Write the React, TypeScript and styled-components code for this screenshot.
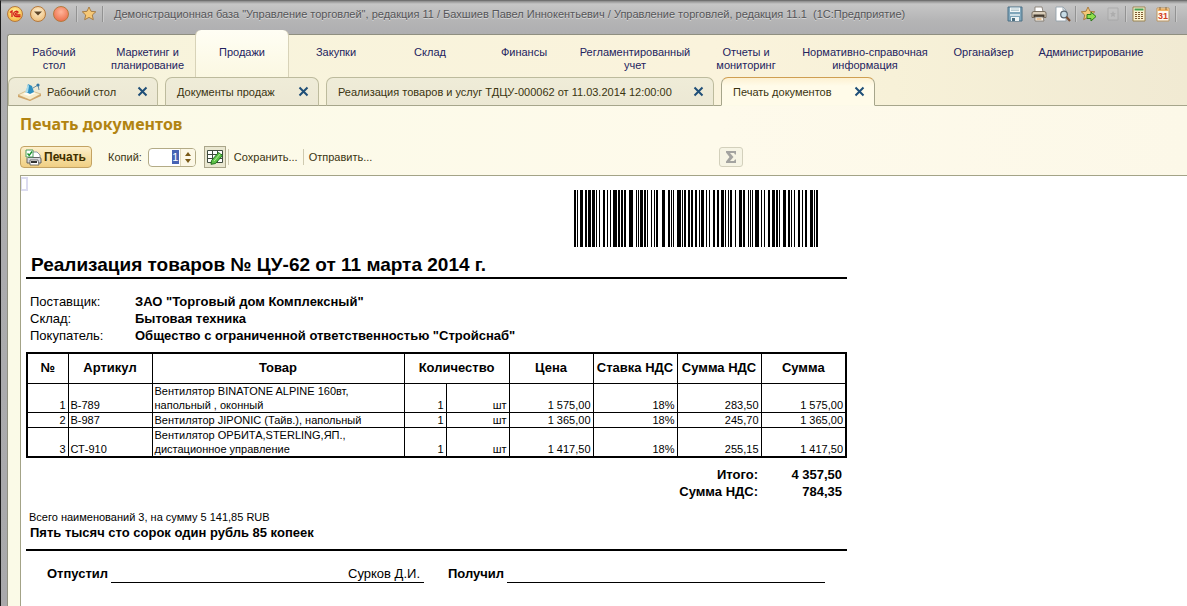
import React from "react";
import styled, { createGlobalStyle, css } from "styled-components";

const Global = createGlobalStyle`
  * { box-sizing: border-box; }
  body { margin: 0; font-family: "Liberation Sans", Arial, sans-serif; font-size: 11px; color: #3a3410; }
  button, input { font: inherit; color: inherit; margin: 0; }
  a { color: inherit; text-decoration: none; }
  p, h1, h2 { margin: 0; }
`;

const Window = styled.div`
  min-height: 100vh;
  display: flex;
  flex-direction: column;
  background: linear-gradient(#8a8a8a 0, #c6c6c6 3px, #b4b4b5 20px, #aeaeb0 34px, #a9a9ab 100%);
  border-left: 1px solid #1c1c1c;
  border-top: 1px solid #707070;
  overflow: hidden;
`;

const TitleBar = styled.header`
  height: 33px;
  flex: none;
  display: flex;
  align-items: center;
  padding: 0 10px 8px 6px;
`;

const RoundButton = styled.button<{ $from: string; $to: string }>`
  width: 16px;
  height: 16px;
  margin-right: 7px;
  padding: 0;
  display: grid;
  place-items: center;
  border: 1px solid #b5793c;
  border-radius: 50%;
  background: radial-gradient(circle at 50% 35%, ${(p) => p.$from}, ${(p) => p.$to});
  svg { display: block; }
`;

const Divider = styled.span`
  width: 2px;
  height: 16px;
  background: linear-gradient(90deg, #929292 50%, #cacaca 50%);
`;

const IconButton = styled.button`
  width: 24px;
  height: 18px;
  padding: 0;
  border: 0;
  background: none;
  display: grid;
  place-items: center;
`;

const Caption = styled.h1`
  flex: 1;
  min-width: 0;
  margin-left: 10px;
  font-size: 11px;
  font-weight: 400;
  line-height: 16px;
  white-space: nowrap;
  color: #555558;
  text-shadow: 0 1px 0 #d8d8d8;
`;

const Tools = styled.div`
  display: flex;
  align-items: center;
`;

const Frame = styled.div`
  flex: 1;
  display: flex;
  flex-direction: column;
  margin-left: 6px;
  border-left: 1px solid #8f8f80;
  border-top: 1px solid #8f8f80;
  border-top-left-radius: 3px;
  background: #fcfae8;
`;

const Head = styled.div`
  background: linear-gradient(90deg, #f7f4dc 0%, #faf3dc 60%, #f7f1d8 75%, #f1ead3 100%);
  border-top-left-radius: 3px;
`;

const Sections = styled.nav`
  display: flex;
  height: 42px;
`;

const Section = styled.a<{ $w: number; $active?: boolean }>`
  flex: 0 1 ${(p) => p.$w}px;
  padding-top: 11px;
  text-align: center;
  line-height: 13px;
  color: #23235f;
  white-space: pre-line;
  ${(p) =>
    p.$active &&
    css`
      margin-top: -5px;
      padding-top: 16px;
      border: 1px solid #d8d3b8;
      border-width: 0 1px;
      border-radius: 6px 6px 0 0;
      background: linear-gradient(#fffef4, #fbf8e2);
    `}
`;

const Tabs = styled.div`
  display: flex;
  gap: 7px;
  height: 29px;
  box-shadow: inset 0 -1px 0 #a6a58b;
`;

const Tab = styled.div<{ $w: number; $active?: boolean }>`
  flex: 0 1 ${(p) => p.$w}px;
  display: flex;
  align-items: center;
  padding: 0 8px 0 11px;
  border: 1px solid #bdbb9d;
  border-bottom-color: #a6a58b;
  border-radius: 7px 7px 0 0;
  background: linear-gradient(#efecd8, #ece8d4);
  white-space: nowrap;
  ${(p) =>
    p.$active &&
    css`
      border-color: #a6a58b;
      border-top-color: #cf9f52;
      border-bottom-color: #fcfae8;
      background: linear-gradient(#fdf1d2, #fffbe9 8px);
    `}
  svg { flex: none; }
  > svg { margin: 0 4px 0 -3px; }
`;

const TabLink = styled.a`
  flex: 1;
`;

const CloseButton = styled.button`
  width: 13px;
  height: 13px;
  padding: 0;
  border: 0;
  background: none;
  display: grid;
  place-items: center;
`;

const Page = styled.main`
  flex: 1;
  display: flex;
  flex-direction: column;
  padding: 8px 0 0 12px;
  background: linear-gradient(90deg, #fbfae7, #fefaeb 60%, #fcf8e8);
`;

const PageTitle = styled.h2`
  font-family: "Noto Sans", "Open Sans", sans-serif;
  font-size: 16px;
  line-height: 20px;
  font-weight: 700;
  color: #b28411;
`;

const Toolbar = styled.div`
  display: flex;
  align-items: center;
  max-width: 723px;
  height: 24px;
  margin: 11px 0 6px;
  white-space: nowrap;
`;

const PrintButton = styled.button`
  display: flex;
  align-items: center;
  gap: 2px;
  width: 72px;
  height: 22px;
  padding: 0 4px;
  border: 1px solid #c3a363;
  border-radius: 4px;
  background: linear-gradient(#fdf0cd, #f5dc9d 60%, #f0cf83);
  font-size: 12px;
  font-weight: 700;
  color: #3f3000;
`;

const CopiesLabel = styled.label`
  margin: 0 6px 0 16px;
`;

const Spinner = styled.div`
  display: flex;
  align-items: center;
  justify-content: flex-end;
  width: 48px;
  height: 19px;
  border: 1px solid #b3ab86;
  border-radius: 4px;
  background: #fff;
  overflow: hidden;
`;

const CopiesInput = styled.input`
  width: 7px;
  height: 14px;
  padding: 0;
  border: 0;
  background: #4763b4;
  color: #fff;
  text-align: center;
`;

const Steps = styled.div`
  display: flex;
  flex-direction: column;
  justify-content: center;
  gap: 3px;
  width: 15px;
  height: 17px;
  margin-left: 1px;
  border-left: 1px solid #ddd6b8;
  background: #fcf8e6;
`;

const Step = styled.button`
  height: 4px;
  padding: 0;
  border: 0;
  background: none;
  display: grid;
  place-items: center;
`;

const EditTableButton = styled.button`
  width: 22px;
  height: 22px;
  margin: 0 2px 0 8px;
  padding: 0;
  border: 1px solid #aaa68a;
  background: #e9e7d0;
  display: grid;
  place-items: center;
`;

const TextButton = styled.button`
  padding: 0 5px;
  border: 0;
  border-left: 1px solid #cfcab0;
  background: none;
  line-height: 16px;
`;

const SumButton = styled.button`
  width: 24px;
  height: 20px;
  margin-left: auto;
  padding: 0;
  border: 1px solid #d3d0bc;
  border-radius: 3px;
  background: #f6f4e4;
  display: grid;
  place-items: center;
`;

const Sheet = styled.section`
  flex: 1;
  padding: 14px 5px 0;
  border: 1px solid #a3a387;
  border-width: 1px 0 0 1px;
  background: #fff;
  color: #000;
  position: relative;
`;

const CellCursor = styled.span`
  position: absolute;
  left: 0;
  top: 1px;
  width: 7px;
  height: 14px;
  border: 2px solid #dcdcf0;
  border-left-width: 1px;
`;

const Paper = styled.div`
  max-width: 821px;
`;

const Barcode = styled.svg`
  display: block;
  margin-left: auto;
  margin-right: 29px;
`;

const DocTitle = styled.h2`
  margin-top: 5px;
  padding-left: 5px;
  height: 27px;
  font-size: 19px;
  line-height: 25px;
  border-bottom: 2px solid #000;
`;

const Parties = styled.dl`
  display: grid;
  grid-template-columns: 105px 1fr;
  margin: 14px 0 8px;
  padding-left: 4px;
  font-size: 13px;
  line-height: 17px;
  dt, dd { margin: 0; }
  dd { font-weight: 700; }
`;

const Goods = styled.table`
  width: calc(100% - 1px);
  table-layout: fixed;
  border-collapse: collapse;
  border: 2px solid #000;
  font-size: 11px;
  line-height: 14px;
  th {
    height: 30px;
    padding: 0;
    border: 1px solid #000;
    font-size: 13px;
    white-space: nowrap;
  }
  td {
    padding: 0 2px;
    border: 1px solid #000;
    vertical-align: bottom;
  }
`;

const Num = styled.td`
  text-align: right;
`;

const Totals = styled.dl`
  display: grid;
  grid-template-columns: 1fr 84px;
  margin: 8px 0 9px;
  padding-right: 5px;
  text-align: right;
  font-size: 13px;
  line-height: 17px;
  font-weight: 700;
  dt, dd { margin: 0; }
`;

const Summary = styled.p`
  padding-left: 3px;
  font-size: 11px;
  line-height: 16px;
`;

const InWords = styled.p`
  height: 26px;
  padding-left: 4px;
  font-size: 13px;
  line-height: 16px;
  font-weight: 700;
  border-bottom: 2px solid #000;
`;

const Signatures = styled.div`
  display: flex;
  gap: 24px;
  padding: 14px 22px 10px 21px;
  font-size: 13px;
  line-height: 17px;
`;

const Signature = styled.div`
  flex: 1;
  display: flex;
  gap: 3px;
`;

const SignatureLine = styled.span`
  flex: 1;
  padding-right: 4px;
  border-bottom: 1px solid #000;
  text-align: right;
`;

const sections: { name: string; w: number; active?: boolean }[] = [
  { name: "Рабочий\nстол", w: 92 },
  { name: "Маркетинг и\nпланирование", w: 95 },
  { name: "Продажи", w: 94, active: true },
  { name: "Закупки", w: 94 },
  { name: "Склад", w: 94 },
  { name: "Финансы", w: 94 },
  { name: "Регламентированный\nучет", w: 128 },
  { name: "Отчеты и\nмониторинг", w: 94 },
  { name: "Нормативно-справочная\nинформация", w: 144 },
  { name: "Органайзер", w: 93 },
  { name: "Администрирование", w: 122 },
];

const tabs: { name: string; w: number; home?: boolean; active?: boolean }[] = [
  { name: "Рабочий стол", w: 150, home: true },
  { name: "Документы продаж", w: 154 },
  { name: "Реализация товаров и услуг ТДЦУ-000062 от 11.03.2014 12:00:00", w: 388 },
  { name: "Печать документов", w: 154, active: true },
];

const goods = [
  ["1", "В-789", "Вентилятор BINATONE ALPINE 160вт, напольный , оконный", "1", "шт", "1 575,00", "18%", "283,50", "1 575,00"],
  ["2", "В-987", "Вентилятор JIPONIC (Тайв.), напольный", "1", "шт", "1 365,00", "18%", "245,70", "1 365,00"],
  ["3", "СТ-910", "Вентилятор ОРБИТА,STERLING,ЯП., дистационное управление", "1", "шт", "1 417,50", "18%", "255,15", "1 417,50"],
];

const columns = [41, 84, 252, 42, 63, 84, 84, 84, 85];

// Code 128 symbols: alternating bar and space widths in modules
const symbols =
  "211232 213131 121322 121241 212123 431111 312113 121124 332111 134111 222122 " +
  "221132 121322 223112 112313 312311 111242 121322 312113 322112 132212 2331112";

function barcodeBars() {
  const bars: { x: number; w: number }[] = [];
  let x = 0;
  symbols
    .replace(/ /g, "")
    .split("")
    .forEach((digit, i) => {
      const w = Number(digit);
      if (i % 2 === 0) bars.push({ x, w });
      x += w;
    });
  return bars;
}

const CloseIcon = () => (
  <svg width="11" height="11" viewBox="0 0 11 11">
    <path d="M1.5 1.5 9.5 9.5M9.5 1.5 1.5 9.5" stroke="#1f4f78" strokeWidth="2" />
  </svg>
);

const DeskIcon = () => (
  <svg width="26" height="20" viewBox="0 0 26 20">
    <path d="M1 13 11 8l13 4-11 6z" fill="#f8edcc" stroke="#c8ab72" strokeWidth=".7" />
    <path d="M1 13v2l12 4 11-5v-2l-11 6z" fill="#cfa468" />
    <path d="m6 12 6-3 7 2-7 3z" fill="#fffdf3" />
    <path d="M9 10 11 2l4 2 2 6-4 2z" fill="#2f8fc0" />
    <path d="m11 2 1 2-1 6-3 1z" fill="#a9dcec" />
    <path d="M16 6l5-3 1 5" fill="none" stroke="#47758f" strokeWidth=".8" />
    <circle cx="21" cy="3" r="1.6" fill="#3478a5" />
  </svg>
);

const StarIcon = ({ arrow }: { arrow?: boolean }) => (
  <svg width="16" height="16" viewBox="0 0 16 16">
    <path d="m7 1 2 4.3 4.8.5-3.500 3.200 1 4.700L7 11.400l-4.300 2.300 1-4.700L.3 5.800 5 5.300z" fill="#f5c877" stroke="#a1753a" strokeWidth=".9" />
    {arrow && <path d="M6 8.500h4V6l5 4.500-5 4.500v-2.500H6z" fill="#8ede4b" stroke="#2d7a1c" />}
  </svg>
);

const SaveIcon = () => (
  <svg width="16" height="16" viewBox="0 0 16 16">
    <path d="M1 1h14v14H1z" fill="#7fa5ba" stroke="#4d7186" />
    <path d="M3 1.500h10V6H3z" fill="#f3f7f8" />
    <path d="M4 3h8M4 4.500h8" stroke="#9db4bf" strokeWidth=".7" />
    <path d="M3 8h10v2H3z" fill="#cfe0e8" />
    <path d="M4 11h8v4H4z" fill="#eef3f5" />
    <path d="M5 12h3v3H5z" fill="#4c6e80" />
  </svg>
);

const PrinterIcon = () => (
  <svg width="16" height="16" viewBox="0 0 16 16">
    <path d="M4 1h7l1 5H4z" fill="#fff" stroke="#7d7468" strokeWidth=".8" />
    <path d="M1 7q0-1.500 2-1.500h10q2 0 2 1.500v4.500H1z" fill="#d9cdb9" stroke="#6f6557" strokeWidth=".9" />
    <path d="M2.500 8.500h11v2.500h-11z" fill="#453c31" />
    <path d="M4 11h8l1 4H4z" fill="#f8f4ea" stroke="#7d7468" strokeWidth=".8" />
    <path d="M5.500 13h5" stroke="#d38a3e" />
  </svg>
);

const PreviewIcon = () => (
  <svg width="16" height="16" viewBox="0 0 16 16">
    <path d="M1 1h7l3 3v11H1z" fill="#fff" stroke="#93a1ab" strokeWidth=".9" />
    <path d="M8 1v3h3" fill="none" stroke="#93a1ab" strokeWidth=".9" />
    <circle cx="9" cy="8.500" r="3.300" fill="#c8dce6" stroke="#58646d" strokeWidth="1.200" />
    <path d="m11.500 11 3.500 4" stroke="#7a4e31" strokeWidth="2" />
  </svg>
);

const DisabledIcon = () => (
  <svg width="12" height="14" viewBox="0 0 12 14" opacity=".6">
    <path d="M1 1h10v12H1z" fill="#c4c4c4" stroke="#a0a0a0" />
    <path d="m6 4 1 2h2L7.500 7.500 8 10 6 9l-2 1 .5-2.500L3 6h2z" fill="#a4a4a4" />
  </svg>
);

const CalcIcon = () => (
  <svg width="14" height="16" viewBox="0 0 14 16">
    <path d="M1 1h12v14H1z" fill="#fbf3d0" stroke="#9a8454" />
    <path d="M2.500 2.500h9v2h-9z" fill="#45a052" />
    <path d="M3 6.500h8M3 8.500h8M3 10.500h8M3 12.500h8" stroke="#7d5a31" strokeWidth="1.200" strokeDasharray="2 1" />
  </svg>
);

const CalendarIcon = () => (
  <svg width="14" height="16" viewBox="0 0 14 16">
    <path d="M1 2h12v13H1z" fill="#fffaf0" stroke="#bb9560" />
    <path d="M1.500 2.500h11V5h-11z" fill="#efb060" />
    <path d="M4 1v3M10 1v3" stroke="#8c6a3c" />
    <text x="7" y="13" textAnchor="middle" fontFamily="Liberation Sans" fontSize="9" fontWeight="700" fill="#d2401e">31</text>
  </svg>
);

const PrintCheckIcon = () => (
  <svg width="17" height="17" viewBox="0 0 17 17">
    <path d="M5 3h7l3 3v3H5z" fill="#fff" stroke="#77849a" strokeWidth=".8" />
    <path d="M3 8.500h11.500q1.500 0 1.500 1.500v4H2V9.500z" fill="#d6d8dc" stroke="#555" strokeWidth=".9" />
    <path d="M5 11h8l1 5H5z" fill="#fff" stroke="#555" strokeWidth=".8" />
    <path d="M6 12h6v2H6z" fill="#333" />
    <path d="M1 1h7v7H1z" fill="#fff" stroke="#4c9b5d" />
    <path d="m2.500 4.500 1.700 1.800L7 2.500" fill="none" stroke="#159127" strokeWidth="1.400" />
  </svg>
);

const EditTableIcon = () => (
  <svg width="18" height="16" viewBox="0 0 18 16">
    <path d="M1.500 1.500h15v12h-15z" fill="#fff" stroke="#3e4a3e" />
    <path d="M1.500 5.500h15M1.500 9.500h15M6.500 1.500v12M11.500 1.500v12" stroke="#3e4a3e" />
    <path d="m5.500 11.500 7-8 4 3-7 8-4.500.8z" fill="#5cc247" stroke="#20711e" />
    <path d="m8 12 6.500-7.500" stroke="#b7ec9c" />
  </svg>
);

export default function App() {
  return (
    <>
      <Global />
      <Window>
        <TitleBar>
          <RoundButton $from="#fff6a0" $to="#f5a62c" aria-label="Главное меню">
            <svg width="12" height="8" viewBox="0 0 12 8">
              <path d="M1 2.500 3 1v6M9.500 2.500A2.600 2.600 0 1 0 7.500 6.500H11.500M8.500 3.500A1 1 0 1 0 7.500 4.800H11.500" fill="none" stroke="#d3201a" strokeWidth="1.300" />
            </svg>
          </RoundButton>
          <RoundButton $from="#fff0d0" $to="#e8b269" aria-label="Меню">
            <svg width="8" height="5" viewBox="0 0 8 5">
              <path d="M0 .5h8L4 4.500z" fill="#5d4527" />
            </svg>
          </RoundButton>
          <RoundButton $from="#ffb59a" $to="#e8603a" aria-label="Закрыть" />
          <Divider />
          <IconButton aria-label="Избранное"><StarIcon /></IconButton>
          <Divider />
          <Caption>
            Демонстрационная база "Управление торговлей", редакция 11 / Бахшиев Павел Иннокентьевич / Управление торговлей, редакция 11.1&nbsp; (1С:Предприятие)
          </Caption>
          <Tools>
            <IconButton aria-label="Сохранить"><SaveIcon /></IconButton>
            <IconButton aria-label="Печать"><PrinterIcon /></IconButton>
            <IconButton aria-label="Предварительный просмотр"><PreviewIcon /></IconButton>
            <Divider />
            <IconButton aria-label="Добавить в избранное"><StarIcon arrow /></IconButton>
            <IconButton aria-label="Ссылка" disabled><DisabledIcon /></IconButton>
            <Divider />
            <IconButton aria-label="Калькулятор"><CalcIcon /></IconButton>
            <IconButton aria-label="Календарь"><CalendarIcon /></IconButton>
            <Divider />
          </Tools>
        </TitleBar>
        <Frame>
          <Head>
            <Sections>
              {sections.map((s) => (
                <Section key={s.name} href="#" $w={s.w} $active={s.active}>{s.name}</Section>
              ))}
            </Sections>
            <Tabs>
              {tabs.map((t) => (
                <Tab key={t.name} $w={t.w} $active={t.active}>
                  {t.home && <DeskIcon />}
                  <TabLink href="#">{t.name}</TabLink>
                  <CloseButton aria-label="Закрыть вкладку"><CloseIcon /></CloseButton>
                </Tab>
              ))}
            </Tabs>
          </Head>
          <Page>
            <PageTitle>Печать документов</PageTitle>
            <Toolbar>
              <PrintButton><PrintCheckIcon />Печать</PrintButton>
              <CopiesLabel htmlFor="copies">Копий:</CopiesLabel>
              <Spinner>
                <CopiesInput id="copies" defaultValue="1" />
                <Steps>
                  <Step aria-label="Больше"><svg width="6" height="4" viewBox="0 0 6 4"><path d="M0 4h6L3 0z" fill="#7a5a17" /></svg></Step>
                  <Step aria-label="Меньше"><svg width="6" height="4" viewBox="0 0 6 4"><path d="M0 0h6L3 4z" fill="#7a5a17" /></svg></Step>
                </Steps>
              </Spinner>
              <EditTableButton aria-label="Редактировать"><EditTableIcon /></EditTableButton>
              <TextButton>Сохранить...</TextButton>
              <TextButton>Отправить...</TextButton>
              <SumButton aria-label="Сумма">
                <svg width="14" height="14" viewBox="0 0 14 14">
                  <path d="M2 1h10v3.500h-1L10 3H6l3.500 4L6 11h4l1-1.500h1V13H2v-1.500L5.500 7 2 2.500z" fill="#a3a3a0" />
                </svg>
              </SumButton>
            </Toolbar>
            <Sheet>
              <CellCursor />
              <Paper>
                <Barcode width="244" height="57" viewBox="0 0 244 57" shapeRendering="crispEdges" role="img" aria-label="Штрихкод">
                  {barcodeBars().map((b) => (
                    <rect key={b.x} x={b.x} y="0" width={b.w} height="57" />
                  ))}
                </Barcode>
                <DocTitle>Реализация товаров № ЦУ-62 от 11 марта 2014 г.</DocTitle>
                <Parties>
                  <dt>Поставщик:</dt>
                  <dd>ЗАО "Торговый дом Комплексный"</dd>
                  <dt>Склад:</dt>
                  <dd>Бытовая техника</dd>
                  <dt>Покупатель:</dt>
                  <dd>Общество с ограниченной ответственностью "Стройснаб"</dd>
                </Parties>
                <Goods>
                  <colgroup>
                    {columns.map((w, i) => (
                      <col key={i} width={w} />
                    ))}
                  </colgroup>
                  <thead>
                    <tr>
                      <th>№</th>
                      <th>Артикул</th>
                      <th>Товар</th>
                      <th colSpan={2}>Количество</th>
                      <th>Цена</th>
                      <th>Ставка НДС</th>
                      <th>Сумма НДС</th>
                      <th>Сумма</th>
                    </tr>
                  </thead>
                  <tbody>
                    {goods.map((row) => (
                      <tr key={row[0]}>
                        {row.map((cell, i) =>
                          i === 1 || i === 2 ? <td key={i}>{cell}</td> : <Num key={i}>{cell}</Num>
                        )}
                      </tr>
                    ))}
                  </tbody>
                </Goods>
                <Totals>
                  <dt>Итого:</dt>
                  <dd>4 357,50</dd>
                  <dt>Сумма НДС:</dt>
                  <dd>784,35</dd>
                </Totals>
                <Summary>Всего наименований 3, на сумму 5 141,85 RUB</Summary>
                <InWords>Пять тысяч сто сорок один рубль 85 копеек</InWords>
                <Signatures>
                  <Signature>
                    <b>Отпустил</b>
                    <SignatureLine>Сурков Д.И.</SignatureLine>
                  </Signature>
                  <Signature>
                    <b>Получил</b>
                    <SignatureLine />
                  </Signature>
                </Signatures>
              </Paper>
            </Sheet>
          </Page>
        </Frame>
      </Window>
    </>
  );
}
